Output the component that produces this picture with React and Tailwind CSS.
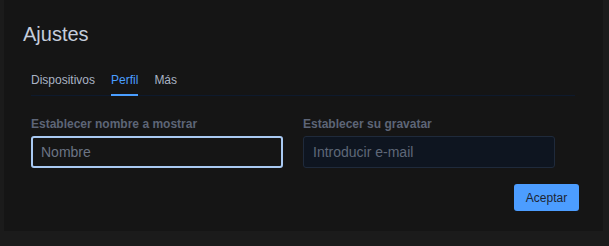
import React from "react";

export default function App() {
  return (
    <div className="w-[609px] h-[246px] bg-[#1b1b1b] font-['Liberation_Sans',Arial,sans-serif]">
      <div className="ml-[4px] w-[599px] h-[231px] bg-[#151515] px-[19px] pt-[20px] pb-[20px] flex flex-col">
        <h1 className="text-[20px] leading-[28px] text-[#c5cddc]">Ajustes</h1>
        <div className="pl-[8px] pr-[9px] mt-[24px]">
          <div className="flex gap-4 border-b border-[#0e1a2d] text-[12px] leading-[16px]">
            <button className="-mb-px pb-[6px] border-b-2 border-transparent text-[#a9b3c4]">Dispositivos</button>
            <button className="-mb-px pb-[6px] border-b-2 border-[#4a9eff] text-[#4a9eff]">Perfil</button>
            <button className="-mb-px pb-[6px] border-b-2 border-transparent text-[#a9b3c4]">Más</button>
          </div>
          <div className="flex gap-[20px] mt-[20px]">
            <div className="flex flex-col w-[252px]">
              <label className="text-[12px] leading-[16px] font-bold text-[#5d6577] mb-[4px]">
                Establecer nombre a mostrar
              </label>
              <input
                placeholder="Nombre"
                className="h-[32px] w-full rounded-[3px] border-2 border-[#a9c9f2] bg-[#151515] pl-[8px] text-[14px] text-[#c5cddc] placeholder:text-[#6c7484] outline-none"
              />
            </div>
            <div className="flex flex-col w-[252px]">
              <label className="text-[12px] leading-[16px] font-bold text-[#5d6577] mb-[4px]">
                Establecer su gravatar
              </label>
              <input
                placeholder="Introducir e-mail"
                className="h-[32px] w-full rounded-[3px] border border-[#1f2a3b] bg-[#0e1520] pl-[9px] text-[14px] text-[#c5cddc] placeholder:text-[#5f6878] outline-none"
              />
            </div>
          </div>
        </div>
        <div className="flex justify-end pr-[5px] mt-[16px]">
          <button className="w-[65px] h-[27px] rounded-[3px] bg-[#4c9dff] text-[12px] text-[#1c2533]">
            Aceptar
          </button>
        </div>
      </div>
    </div>
  );
}
